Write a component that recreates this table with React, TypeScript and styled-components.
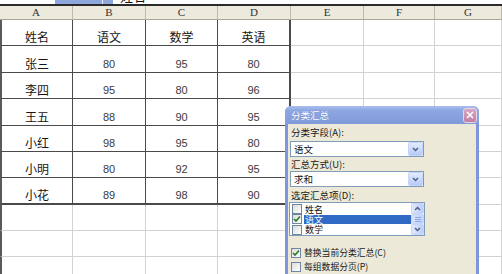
import React from 'react';
import styled, { createGlobalStyle, css } from 'styled-components';

const CJK = `"Noto Sans CJK SC", "Liberation Sans", sans-serif`;

const Global = createGlobalStyle`
  html, body { margin: 0; padding: 0; background: #fff; }
  body { width: 502px; height: 274px; overflow: hidden; font-family: ${CJK}; }
`;

const Page = styled.div`
  position: relative;
  width: 502px;
  height: 274px;
  overflow: hidden;
  background: #fff;
`;

/* ---------- formula strip (cut off at top) ---------- */
const FormulaStrip = styled.div`
  display: flex;
  align-items: flex-end;
  height: 4px;
  overflow: hidden;
  background: #fff;
`;
const NameBox = styled.div`
  width: 55px;
  padding-left: 9px;
  box-sizing: border-box;
  font: 12px/15px "Liberation Serif", serif;
  color: #222;
`;
const NameDrop = styled.div`
  width: 58px;
  height: 4px;
  background: linear-gradient(to right, #8ea6de 0 47px, #e8eefa 47px 48px, #8ea6de 48px);
`;
const FormulaText = styled.div`
  padding-left: 7px;
  font: 13px/16px ${CJK};
  color: #111;
`;
const Divider = styled.div`
  height: 2px;
  background: #2a2a2a;
`;

/* ---------- grid ---------- */
const Grid = styled.div`
  display: grid;
  grid-template-columns: 73px 73px 72px 73px 73px 71px 67px;
  grid-template-rows: 14px 26px 27px 26px 27px 26px 26px 27px 26px 26px 26px;
`;

const HeaderCell = styled.div`
  box-sizing: border-box;
  background: #ece9dd;
  border-right: 1px solid #bdbaad;
  border-bottom: 1px solid #a8a59a;
  display: flex;
  align-items: center;
  justify-content: center;
  font: 11px/13px "Liberation Serif", serif;
  color: #333;
`;

type CellProps = { $data?: boolean; $lastCol?: boolean; $lastRow?: boolean; $first?: boolean; $num?: boolean };

const Cell = styled.div<CellProps>`
  box-sizing: border-box;
  display: flex;
  align-items: flex-end;
  justify-content: center;
  padding-bottom: 1px;
  border-right: 1px solid #d2d2d2;
  border-bottom: 1px solid #d2d2d2;
  ${(p) => p.$first && css`border-left: 2px solid #5a5a5a;`}
  ${(p) =>
    p.$data &&
    css`
      border-right: ${p.$lastCol ? '2px' : '1px'} solid #4a4a4a;
      border-bottom: ${p.$lastRow ? '2px' : '1px'} solid #4a4a4a;
    `}
  ${(p) =>
    p.$num
      ? css`font: 11px/13px "Liberation Sans", sans-serif; color: #3a3a3a;`
      : css`font: 12px/15px ${CJK}; color: #151515;`}
`;

/* ---------- dialog ---------- */
const Window = styled.div`
  position: absolute;
  left: 285px;
  top: 106px;
  width: 194px;
  height: 190px;
  box-sizing: border-box;
  padding: 0 3px;
  border-radius: 6px 6px 0 0;
  background: #7f97d8;
  display: flex;
  flex-direction: column;
`;
const TitleBar = styled.div`
  height: 18px;
  margin: 0 -3px;
  padding: 0 2px 0 6px;
  border-radius: 6px 6px 0 0;
  background: linear-gradient(to bottom, #aabfef 0%, #8ea7e2 25%, #809ada 100%);
  display: flex;
  align-items: center;
  justify-content: space-between;
`;
const Title = styled.span`
  font: 9.5px/12px ${CJK};
  color: #fff;
  text-shadow: 0 0 1px #6a82c4;
`;
const CloseButton = styled.div`
  width: 14px;
  height: 15px;
  box-sizing: border-box;
  border: 1px solid #e6d6e6;
  border-radius: 3px;
  background: linear-gradient(to bottom, #d9a6c4, #c27ea5);
  display: flex;
  align-items: center;
  justify-content: center;
`;
const Body = styled.div`
  flex: 1;
  background: #ece9d8;
  padding: 2px 0 0 2px;
  display: flex;
  flex-direction: column;
  align-items: flex-start;
`;
const Label = styled.div<{ $h?: number; $mt?: number }>`
  height: ${(p) => p.$h ?? 13}px;
  margin-top: ${(p) => p.$mt ?? 0}px;
  padding-left: 1px;
  font: 9.5px/13px ${CJK};
  color: #1a1a1a;
  white-space: nowrap;
`;
const Combo = styled.div<{ $mt?: number }>`
  width: 134px;
  height: 16px;
  margin-top: ${(p) => p.$mt ?? 0}px;
  box-sizing: border-box;
  border: 1px solid #7f9db9;
  background: #fff;
  display: flex;
  align-items: center;
  justify-content: space-between;
  padding-left: 3px;
  font: 9.5px/13px ${CJK};
  color: #111;
`;
const DropBtn = styled.div`
  width: 15px;
  height: 14px;
  box-sizing: border-box;
  border: 1px solid #c3d3fd;
  border-radius: 2px;
  background: linear-gradient(to bottom, #e3ebfe, #b7cbf7);
  display: flex;
  align-items: center;
  justify-content: center;
`;
const ListBox = styled.div`
  width: 136px;
  height: 34px;
  margin-left: -1px;
  box-sizing: border-box;
  border: 1px solid #7f9db9;
  background: #fff;
  display: flex;
`;
const Items = styled.div`
  flex: 1;
  padding-top: 1px;
  display: flex;
  flex-direction: column;
`;
const Item = styled.div`
  height: 11px;
  display: flex;
  align-items: center;
  padding-left: 2px;
  gap: 2px;
`;
const ItemText = styled.span<{ $sel?: boolean }>`
  flex: 1;
  height: 9px;
  display: flex;
  align-items: center;
  padding-left: 1px;
  font: 9px/9px ${CJK};
  color: ${(p) => (p.$sel ? '#fff' : '#111')};
  background: ${(p) => (p.$sel ? '#316ac5' : 'transparent')};
`;
const Box = styled.span`
  width: 10px;
  height: 10px;
  box-sizing: border-box;
  border: 1px solid #6f85a4;
  background: linear-gradient(135deg, #dcdcd6, #fff);
  display: inline-flex;
  align-items: center;
  justify-content: center;
  flex: none;
`;
const ScrollBar = styled.div`
  width: 13px;
  display: flex;
  flex-direction: column;
  background: #f3f2ee;
`;
const ScrollBtn = styled.div`
  height: 11px;
  box-sizing: border-box;
  border: 1px solid #c7d5f8;
  border-radius: 2px;
  background: linear-gradient(to right, #dfe8fd, #bccff8);
  display: flex;
  align-items: center;
  justify-content: center;
`;
const Thumb = styled.div`
  flex: 1;
  box-sizing: border-box;
  border: 1px solid #c7d5f8;
  border-radius: 2px;
  background: linear-gradient(to right, #d6e2fc, #c2d3f9);
  display: flex;
  flex-direction: column;
  align-items: center;
  justify-content: center;
  gap: 1px;
`;
const Grip = styled.span`
  width: 6px;
  height: 1px;
  background: #8fa8e2;
`;
const CheckRow = styled.div<{ $mt?: number }>`
  height: 14px;
  margin-top: ${(p) => p.$mt ?? 0}px;
  padding-left: 1px;
  display: flex;
  align-items: center;
  gap: 3px;
  font: 8.8px/12px ${CJK};
  color: #1a1a1a;
  white-space: nowrap;
`;

const Check = () => (
  <svg width="8" height="8" viewBox="0 0 8 8">
    <path d="M1 4 L3 6 L7 1.5" fill="none" stroke="#2b7a2b" strokeWidth="1.6" />
  </svg>
);
const Chevron = ({ up }: { up?: boolean }) => (
  <svg width="7" height="5" viewBox="0 0 7 5">
    <path d={up ? 'M1 4 L3.5 1.5 L6 4' : 'M1 1 L3.5 3.5 L6 1'} fill="none" stroke="#4d6185" strokeWidth="1.5" />
  </svg>
);

const cols = ['A', 'B', 'C', 'D', 'E', 'F', 'G'];
const rows: string[][] = [
  ['姓名', '语文', '数学', '英语'],
  ['张三', '80', '95', '80'],
  ['李四', '95', '80', '96'],
  ['王五', '88', '90', '95'],
  ['小红', '98', '95', '80'],
  ['小明', '80', '92', '95'],
  ['小花', '89', '98', '90'],
  [],
  [],
  [],
];

export default function App() {
  return (
    <Page>
      <Global />
      <FormulaStrip>
        <NameBox>A1</NameBox>
        <NameDrop />
        <FormulaText>姓名</FormulaText>
      </FormulaStrip>
      <Divider />
      <Grid>
        {cols.map((c) => (
          <HeaderCell key={c}>{c}</HeaderCell>
        ))}
        {rows.map((r, ri) =>
          cols.map((_, ci) => {
            const data = ri < 7 && ci < 4;
            const v = r[ci] ?? '';
            return (
              <Cell
                key={`${ri}-${ci}`}
                $data={data}
                $first={ci === 0}
                $lastCol={ci === 3}
                $lastRow={ri === 6}
                $num={/^\d+$/.test(v)}
              >
                {v}
              </Cell>
            );
          })
        )}
      </Grid>

      <Window>
        <TitleBar>
          <Title>分类汇总</Title>
          <CloseButton>
            <svg width="8" height="8" viewBox="0 0 8 8">
              <path d="M1 1 L7 7 M7 1 L1 7" stroke="#fff" strokeWidth="1.6" />
            </svg>
          </CloseButton>
        </TitleBar>
        <Body>
          <Label $h={14}>分类字段(A):</Label>
          <Combo $mt={1}>
            语文
            <DropBtn>
              <Chevron />
            </DropBtn>
          </Combo>
          <Label $mt={1}>汇总方式(U):</Label>
          <Combo>
            求和
            <DropBtn>
              <Chevron />
            </DropBtn>
          </Combo>
          <Label $mt={2}>选定汇总项(D):</Label>
          <ListBox>
            <Items>
              <Item>
                <Box />
                <ItemText>姓名</ItemText>
              </Item>
              <Item>
                <Box>
                  <Check />
                </Box>
                <ItemText $sel>语文</ItemText>
              </Item>
              <Item>
                <Box />
                <ItemText>数学</ItemText>
              </Item>
            </Items>
            <ScrollBar>
              <ScrollBtn>
                <Chevron up />
              </ScrollBtn>
              <Thumb>
                <Grip />
                <Grip />
                <Grip />
              </Thumb>
              <ScrollBtn>
                <Chevron />
              </ScrollBtn>
            </ScrollBar>
          </ListBox>
          <CheckRow $mt={10}>
            <Box>
              <Check />
            </Box>
            替换当前分类汇总(C)
          </CheckRow>
          <CheckRow>
            <Box />
            每组数据分页(P)
          </CheckRow>
          <CheckRow>
            <Box>
              <Check />
            </Box>
            汇总结果显示在数据下方(S)
          </CheckRow>
        </Body>
      </Window>
    </Page>
  );
}
